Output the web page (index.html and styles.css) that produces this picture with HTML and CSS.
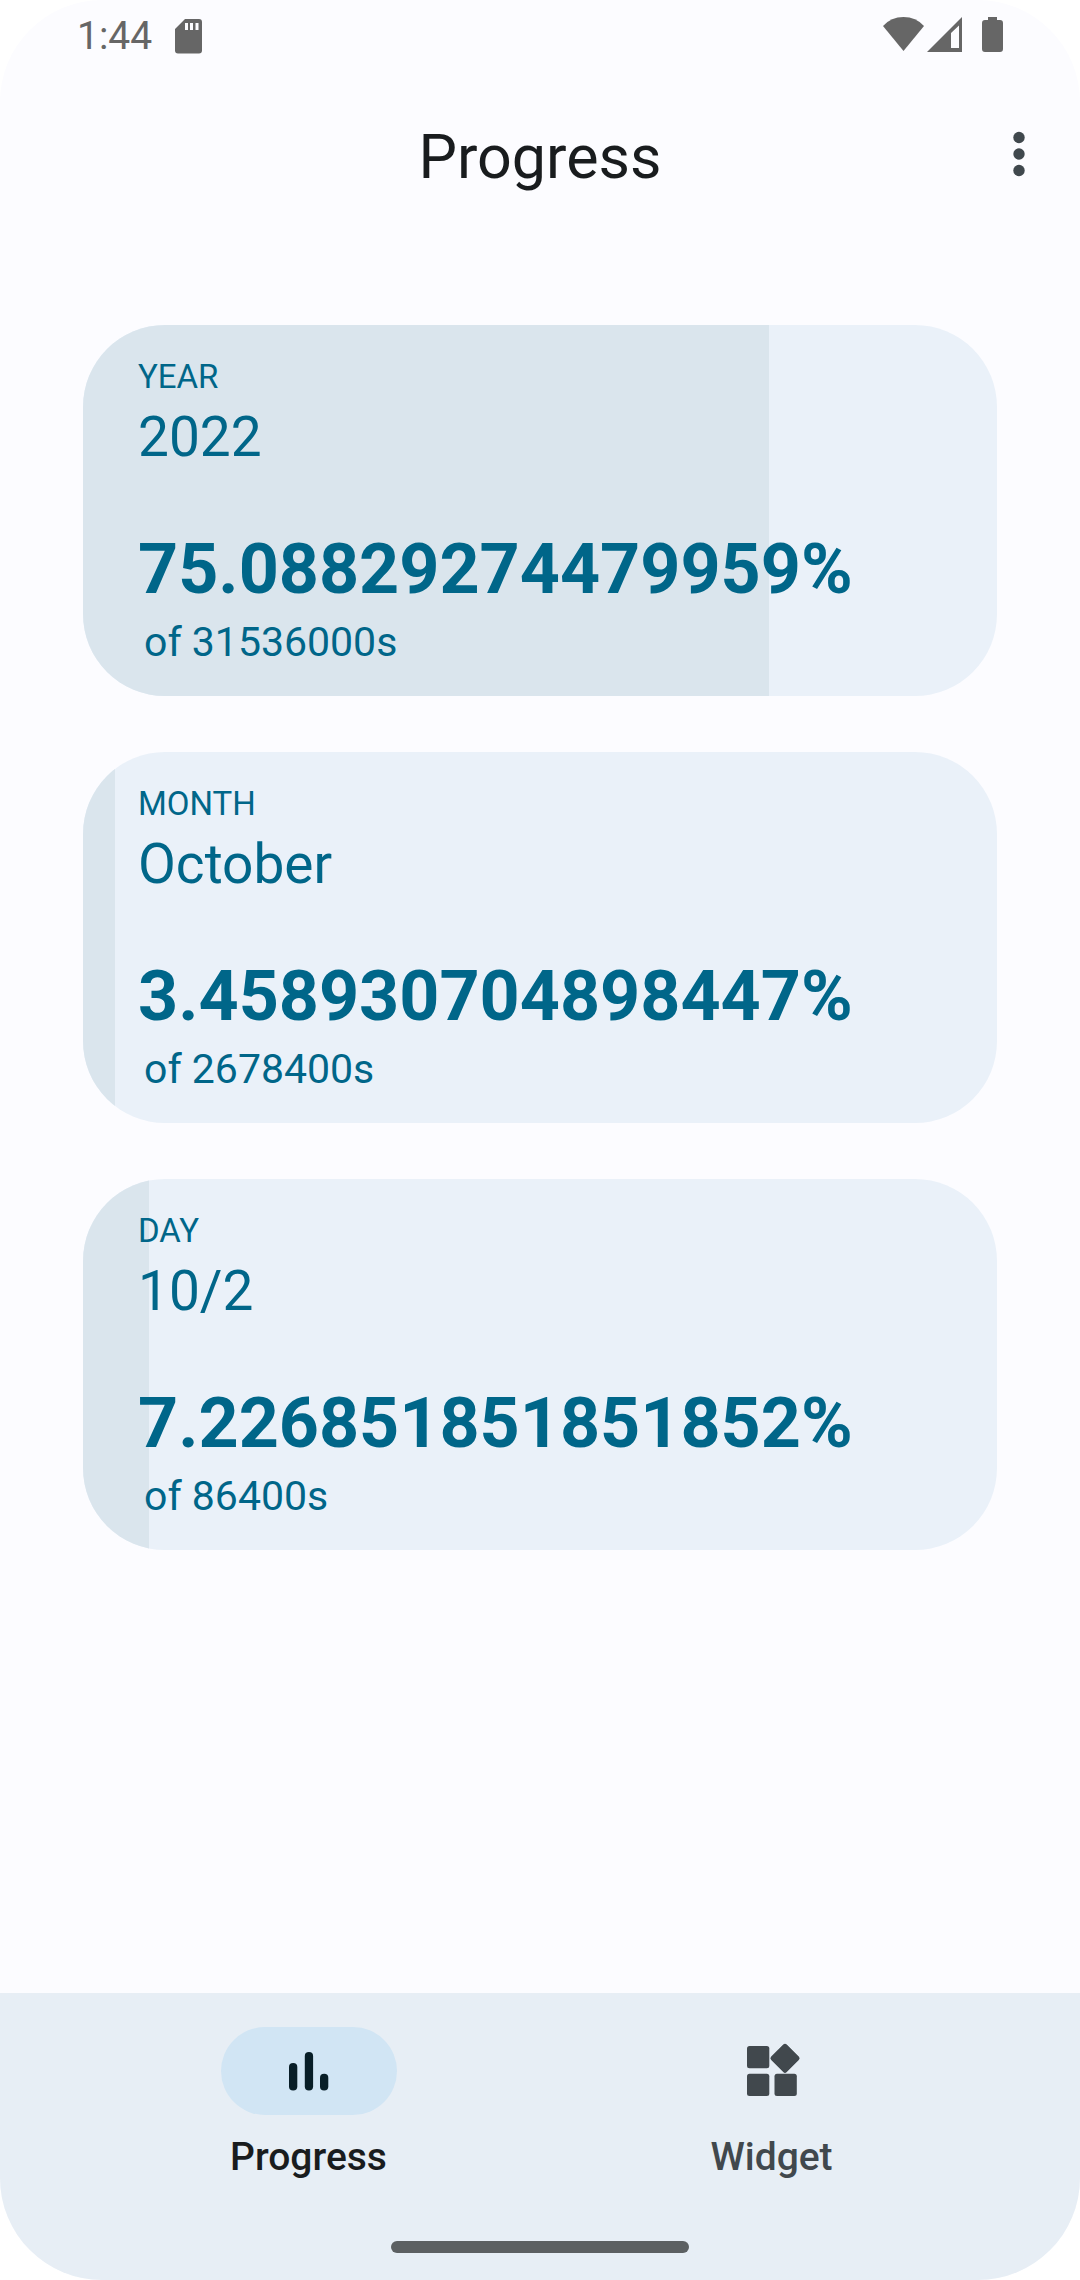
FILE: index.html
```html
<!DOCTYPE html>
<html lang="en">
<head>
<meta charset="utf-8">
<meta name="viewport" content="width=device-width, initial-scale=1">
<title>Progress</title>
<link rel="stylesheet" href="styles.css">
</head>
<body>
<div class="app">
  <div class="status-bar">
    <div class="status-left">
      <span class="clock">1:44</span>
      <svg width="27" height="35" viewBox="0 0 27 35" aria-hidden="true"><path fill-rule="evenodd" d="M10 0H24Q27 0 27 3V31.500Q27 34.500 24 34.500H3Q0 34.500 0 31.500V10ZM10 4V11H13V4ZM15 4V11H18V4ZM20.500 4V11H23.500V4Z"/></svg>
    </div>
    <div class="status-right">
      <svg width="41" height="38" viewBox="0 1 41 38" aria-hidden="true"><path d="M0 10Q8 1 20.500 1T41 10L20.500 35Z"/></svg>
      <svg width="35" height="38" viewBox="0 1 35 38" aria-hidden="true"><path fill-rule="evenodd" d="M35 1V36H0ZM32 9.500L24 17V32H32Z"/></svg>
      <svg class="battery" width="21" height="38" viewBox="0 0 21 38" aria-hidden="true"><path d="M6 0H15V3H18Q21 3 21 6V32Q21 35 18 35H3Q0 35 0 32V6Q0 3 3 3H6Z"/></svg>
    </div>
  </div>

  <header class="top-bar">
    <h1 class="title">Progress</h1>
    <button class="menu-button" type="button" aria-label="More options">
      <svg width="66" height="66" viewBox="0 0 66 66" aria-hidden="true"><circle cx="33" cy="13.500" r="5.700"/><circle cx="33" cy="30" r="5.700"/><circle cx="33" cy="46.500" r="5.700"/></svg>
    </button>
  </header>

  <main class="cards">
    <section class="card">
      <div class="card-fill" style="width: 75.08829274479959%"></div>
      <div class="card-body">
        <h2 class="card-label">YEAR</h2>
        <p class="card-name">2022</p>
        <p class="card-percent">75.08829274479959%</p>
        <p class="card-total">of 31536000s</p>
      </div>
    </section>
    <section class="card">
      <div class="card-fill" style="width: 3.458930704898447%"></div>
      <div class="card-body">
        <h2 class="card-label">MONTH</h2>
        <p class="card-name">October</p>
        <p class="card-percent">3.458930704898447%</p>
        <p class="card-total">of 2678400s</p>
      </div>
    </section>
    <section class="card">
      <div class="card-fill" style="width: 7.226851851851852%"></div>
      <div class="card-body">
        <h2 class="card-label">DAY</h2>
        <p class="card-name">10/2</p>
        <p class="card-percent">7.226851851851852%</p>
        <p class="card-total">of 86400s</p>
      </div>
    </section>
  </main>

  <footer class="bottom">
    <nav class="tabs">
      <a class="tab tab-active" href="#progress" aria-current="page">
        <span class="tab-pill"><svg width="66" height="66" viewBox="0 0 66 66" aria-hidden="true"><rect x="13" y="25" width="8.300" height="27.500" rx="4.100"/><rect x="28.800" y="14" width="8.300" height="38.500" rx="4.100"/><rect x="44" y="35.700" width="8.300" height="16.800" rx="4.100"/></svg></span>
        <span>Progress</span>
      </a>
      <a class="tab" href="#widget">
        <span class="tab-pill"><svg width="66" height="66" viewBox="0 0 66 66" aria-hidden="true"><rect x="8" y="8" width="22.300" height="22.300" rx="2.500"/><rect x="8" y="35.700" width="22.300" height="22.300" rx="2.500"/><rect x="35.500" y="35.700" width="22.300" height="22.300" rx="2.500"/><rect x="35" y="9.300" width="22" height="22" rx="2.500" transform="rotate(45 46 20.300)"/></svg></span>
        <span>Widget</span>
      </a>
    </nav>
    <div class="home-handle"></div>
  </footer>
</div>
</body>
</html>
```
FILE: styles.css
```css
* {
  box-sizing: border-box;
}

body {
  margin: 0;
  background: #ffffff;
  font-family: Roboto, "Liberation Sans", sans-serif;
}

h1, h2, p {
  margin: 0;
  font-weight: 400;
}

svg {
  display: block;
  fill: currentColor;
}

.app {
  display: flex;
  flex-direction: column;
  min-height: 100vh;
  overflow: hidden;
  border-radius: 102px;
  background: #fcfcff;
}

.status-bar {
  display: flex;
  justify-content: space-between;
  align-items: center;
  height: 72px;
  padding: 0 77px;
  color: #666666;
}

.status-left,
.status-right {
  display: flex;
  align-items: center;
}

.status-left {
  gap: 23px;
}

.status-right {
  gap: 3px;
}

.battery {
  margin-left: 17px;
}

.clock {
  font-size: 39px;
  line-height: 72px;
}

.top-bar {
  display: grid;
  grid-template-columns: 66px 1fr 66px;
  align-items: center;
  height: 170px;
  padding: 0 28px;
}

.title {
  grid-column: 2;
  text-align: center;
  font-size: 61px;
  line-height: 76px;
  color: #191c1e;
}

.menu-button {
  padding: 0;
  border: 0;
  background: none;
  color: #40484d;
  cursor: pointer;
}

.cards {
  flex: 1;
  display: flex;
  flex-direction: column;
  gap: 56px;
  padding: 83px;
}

.card {
  position: relative;
  overflow: hidden;
  border-radius: 82px;
  background: #eaf1f9;
  color: #006689;
}

.card-fill {
  position: absolute;
  inset: 0 auto 0 0;
  background: #dae5ed;
}

.card-body {
  position: relative;
  padding: 30px 55px 21px;
}

.card-label {
  font-size: 33px;
  line-height: 44px;
}

.card-name {
  margin-bottom: 54px;
  font-size: 55px;
  line-height: 76px;
}

.card-percent {
  font-size: 70px;
  font-weight: 700;
  line-height: 80px;
}

.card-total {
  padding-left: 6px;
  font-size: 41px;
  line-height: 66px;
}

.bottom {
  padding: 34px 77px 27px;
  background: #e7eef5;
}

.tabs {
  display: grid;
  grid-template-columns: 1fr 1fr;
}

.tab {
  display: flex;
  flex-direction: column;
  align-items: center;
  gap: 14px;
  font-size: 39px;
  font-weight: 500;
  line-height: 56px;
  color: #41484d;
  text-decoration: none;
}

.tab-active {
  color: #191c1e;
}

.tab-pill {
  display: grid;
  place-items: center;
  width: 176px;
  height: 88px;
  border-radius: 44px;
}

.tab-active .tab-pill {
  background: #d1e5f4;
  color: #081e27;
}

.home-handle {
  width: 298px;
  height: 12px;
  margin: 56px auto 0;
  border-radius: 6px;
  background: #5c6062;
}
```
